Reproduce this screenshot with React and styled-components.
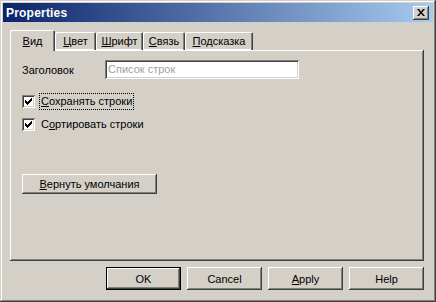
import styled, { createGlobalStyle, css } from 'styled-components'

const tabs = [
  { key: 'В', rest: 'ид', width: 45, active: true },
  { key: 'Ц', rest: 'вет', width: 41 },
  { key: 'Ш', rest: 'рифт', width: 47 },
  { key: 'С', rest: 'вязь', width: 42 },
  { key: 'П', rest: 'одсказка', width: 68 },
]

const raised = css`
  box-shadow: inset -1px -1px #404040, inset 1px 1px #fff, inset -2px -2px #808080;
`

const sunken = css`
  box-shadow: inset 1px 1px #808080, inset -1px -1px #fff, inset 2px 2px #404040,
    inset -2px -2px #d4d0c8;
`

function App() {
  return (
    <>
      <GlobalStyle />
      <Window>
        <TitleBar>
          <Title>Properties</Title>
          <CloseBtn aria-label="close">
            <svg width="8" height="7" viewBox="0 0 8 7">
              <path d="M0 0h2l2 2.5L6 0h2L5 3.5 8 7H6L4 4.5 2 7H0l3-3.5z" fill="#000" />
            </svg>
          </CloseBtn>
        </TitleBar>
        <Body>
          <TabStrip>
            {tabs.map((t) => (
              <Tab key={t.key} $width={t.width} $active={t.active}>
                <Key>{t.key}</Key>
                {t.rest}
              </Tab>
            ))}
          </TabStrip>
          <Panel>
            <FieldRow>
              <FieldLabel>Заголовок</FieldLabel>
              <Input>Список строк</Input>
            </FieldRow>
            <CheckRow>
              <Check>
                <CheckMark />
              </Check>
              <CheckLabel $focused>
                <Key>С</Key>охранять строки
              </CheckLabel>
            </CheckRow>
            <CheckRow $second>
              <Check>
                <CheckMark />
              </Check>
              <CheckLabel>
                С<Key>о</Key>ртировать строки
              </CheckLabel>
            </CheckRow>
            <ResetBtn>
              <Key>В</Key>ернуть умолчания
            </ResetBtn>
          </Panel>
          <ButtonRow>
            <Button $default>OK</Button>
            <Button>Cancel</Button>
            <Button>
              <Key>A</Key>pply
            </Button>
            <Button>Help</Button>
          </ButtonRow>
        </Body>
      </Window>
    </>
  )
}

function CheckMark() {
  return (
    <svg width="7" height="7" viewBox="0 0 7 7">
      <path d="M0 2h1v1h1v1h1V3h1V2h1V1h1V0h1v3H6v1H5v1H4v1H3v1H2V6H1V5H0z" fill="#000" />
    </svg>
  )
}

export default App

const GlobalStyle = createGlobalStyle`
  html, body {
    margin: 0;
    padding: 0;
    background: #d4d0c8;
  }
  body {
    font-family: 'Liberation Sans', Arial, sans-serif;
    font-size: 11px;
    color: #000;
  }
`

const Window = styled.div`
  width: 436px;
  height: 302px;
  box-sizing: border-box;
  padding: 3px;
  background: #d4d0c8;
  box-shadow: inset -1px -1px #404040, inset 1px 1px #d4d0c8, inset -2px -2px #808080,
    inset 2px 2px #fff;
  display: flex;
  flex-direction: column;
`

const TitleBar = styled.div`
  height: 19px;
  display: flex;
  align-items: center;
  justify-content: space-between;
  padding: 0 4px 0 3px;
  background: linear-gradient(to right, #0a246a, #a6caf0);
`

const Title = styled.span`
  color: #fff;
  font-weight: bold;
  font-size: 12px;
  letter-spacing: 0.2px;
`

const CloseBtn = styled.div`
  width: 16px;
  height: 14px;
  background: #d4d0c8;
  ${raised};
  display: flex;
  align-items: center;
  justify-content: center;
  padding-right: 1px;
  box-sizing: border-box;
`

const Body = styled.div`
  flex: 1;
  display: flex;
  flex-direction: column;
  padding: 8px 9px 0 7px;
`

const TabStrip = styled.div`
  display: flex;
  align-items: flex-end;
  height: 20px;
  position: relative;
  z-index: 1;
`

const Tab = styled.div`
  width: ${({ $width }) => $width}px;
  box-sizing: border-box;
  height: ${({ $active }) => ($active ? 21 : 18)}px;
  margin-bottom: ${({ $active }) => ($active ? -1 : 0)}px;
  padding-top: ${({ $active }) => ($active ? 5 : 3)}px;
  text-align: center;
  background: #d4d0c8;
  border-radius: 2px 2px 0 0;
  box-shadow: inset 1px 1px #fff, inset -1px 0 #404040, inset -2px 0 #808080;
  ${({ $active }) =>
    !$active &&
    css`
      box-shadow: inset 1px 1px #fff, inset -1px 0 #404040, inset -2px 0 #808080,
        inset 0 -1px #fff;
    `}
`

const Key = styled.span`
  text-decoration: underline;
`

const Panel = styled.div`
  height: 211px;
  box-sizing: border-box;
  padding: 10px 12px;
  ${raised};
  display: flex;
  flex-direction: column;
  align-items: flex-start;
`

const FieldRow = styled.div`
  display: flex;
  align-items: center;
  height: 19px;
`

const FieldLabel = styled.span`
  width: 83px;
`

const Input = styled.div`
  width: 194px;
  height: 19px;
  box-sizing: border-box;
  padding: 3px 0 0 3px;
  background: #fff;
  color: #a0a0a0;
  ${sunken};
`

const CheckRow = styled.div`
  display: flex;
  align-items: center;
  height: 16px;
  margin-top: ${({ $second }) => ($second ? 7 : 14)}px;
`

const Check = styled.div`
  width: 13px;
  height: 13px;
  box-sizing: border-box;
  background: #fff;
  ${sunken};
  display: flex;
  align-items: center;
  justify-content: center;
  margin-right: 5px;
`

const CheckLabel = styled.span`
  padding: 1px 1px;
  line-height: 13px;
  outline: ${({ $focused }) => ($focused ? '1px dotted #000' : 'none')};
`

const ButtonBase = styled.div`
  height: 23px;
  box-sizing: border-box;
  display: flex;
  align-items: center;
  justify-content: center;
  background: #d4d0c8;
  ${raised};
`

const ResetBtn = styled(ButtonBase)`
  width: 135px;
  height: 20px;
  margin-top: 42px;
`

const ButtonRow = styled.div`
  display: flex;
  justify-content: flex-end;
  gap: 6px;
  margin-top: 6px;
`

const Button = styled(ButtonBase)`
  width: 75px;
  ${({ $default }) =>
    $default &&
    css`
      box-shadow: inset 0 0 0 1px #000, inset -2px -2px #404040, inset 2px 2px #fff,
        inset -3px -3px #808080;
    `}
`
